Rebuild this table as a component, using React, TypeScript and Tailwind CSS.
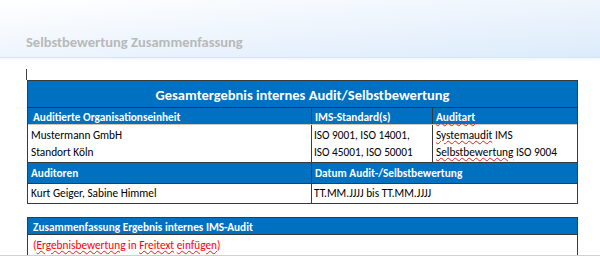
import React from "react";

const font = { fontFamily: "Carlito, Lato, 'Liberation Sans', sans-serif" };

function Spell({ children }: { children: React.ReactNode }) {
  return (
    <span className="underline decoration-wavy decoration-[#e52020] decoration-1 underline-offset-[1px]">
      {children}
    </span>
  );
}

export default function App() {
  return (
    <div className="w-[600px] h-[256px] bg-white overflow-hidden relative" style={font}>
      <div className="h-[58px] bg-gradient-to-br from-white via-[#eef5fd] to-[#dcebfb] border-b border-[#d5e5f5] flex items-end pl-[26px] pb-[8px]">
        <div className="text-[14.5px] font-bold text-[#b9b9b9] leading-none">Selbstbewertung Zusammenfassung</div>
      </div>
      <div className="h-[4px] bg-gradient-to-b from-[#f3f7fb] to-white" />
      <div className="pl-[26px] pt-[7px]">
        <div className="w-px h-[11px] bg-[#444]" />
      </div>
      <div className="ml-[27px] w-[551px] border border-[#3a3a3a] text-[11.3px] text-black leading-none">
        <div className="h-[27px] bg-[#0070c0] text-white font-bold text-[14.5px] flex items-center justify-center pt-[3px] border-b border-[#1e3550]">
          Gesamtergebnis internes Audit/Selbstbewertung
        </div>
        <div className="grid grid-cols-[283px_121px_1fr] bg-[#0070c0] text-white font-bold h-[17px] border-b border-[#cfc8bb]">
          <div className="pl-[5px] flex items-center pt-[3px]">Auditierte Organisationseinheit</div>
          <div className="pl-[3px] flex items-center pt-[3px] border-l border-[#3a3a3a]">IMS-Standard(s)</div>
          <div className="pl-[3px] flex items-center pt-[3px] border-l border-[#3a3a3a]"><Spell>Auditart</Spell></div>
        </div>
        <div className="grid grid-cols-[283px_121px_1fr] h-[38px] border-b border-[#3a3a3a]">
          <div className="pl-[3px] flex flex-col justify-center gap-[4px] pt-[1px]">
            <div className="leading-[13px]">Mustermann GmbH</div>
            <div className="leading-[13px]">Standort Köln</div>
          </div>
          <div className="pl-[2px] flex flex-col justify-center gap-[4px] pt-[1px] border-l border-[#3a3a3a]">
            <div className="leading-[13px]">ISO 9001, ISO 14001,</div>
            <div className="leading-[13px]">ISO 45001, ISO 50001</div>
          </div>
          <div className="pl-[3px] flex flex-col justify-center gap-[4px] pt-[1px] border-l border-[#3a3a3a]">
            <div className="leading-[13px]"><Spell>Systemaudit</Spell> IMS</div>
            <div className="leading-[13px]"><Spell>Selbstbewertung</Spell> ISO 9004</div>
          </div>
        </div>
        <div className="grid grid-cols-[283px_1fr] bg-[#0070c0] text-white font-bold h-[21px] border-b border-[#3a3a3a]">
          <div className="pl-[3px] flex items-center pt-[1px]">Auditoren</div>
          <div className="pl-[3px] flex items-center pt-[1px] border-l border-[#3a3a3a]">Datum Audit-/Selbstbewertung</div>
        </div>
        <div className="grid grid-cols-[283px_1fr] h-[19px]">
          <div className="pl-[3px] flex items-center">Kurt Geiger, Sabine Himmel</div>
          <div className="pl-[2px] flex items-center border-l border-[#3a3a3a]">TT.MM.JJJJ bis TT.MM.JJJJ</div>
        </div>
      </div>
      <div className="ml-[27px] mt-[13px] w-[551px] border-t border-x border-[#3a3a3a] text-[11.3px] leading-none">
        <div className="h-[17px] bg-[#0070c0] text-white font-bold flex items-center pt-[3px] pl-[5px] border-b border-[#3a3a3a]">
          Zusammenfassung Ergebnis internes IMS-Audit
        </div>
        <div className="h-[20px] flex items-center pl-[5px] pt-[1px] text-[#ff0000]">
          <span>(<Spell>Ergebnisbewertung</Spell> in <Spell>Freitext</Spell> <Spell>einfügen</Spell>)</span>
        </div>
      </div>
      <div className="absolute left-0 right-0 bottom-0 h-px bg-[#d0d0d0]" />
    </div>
  );
}
